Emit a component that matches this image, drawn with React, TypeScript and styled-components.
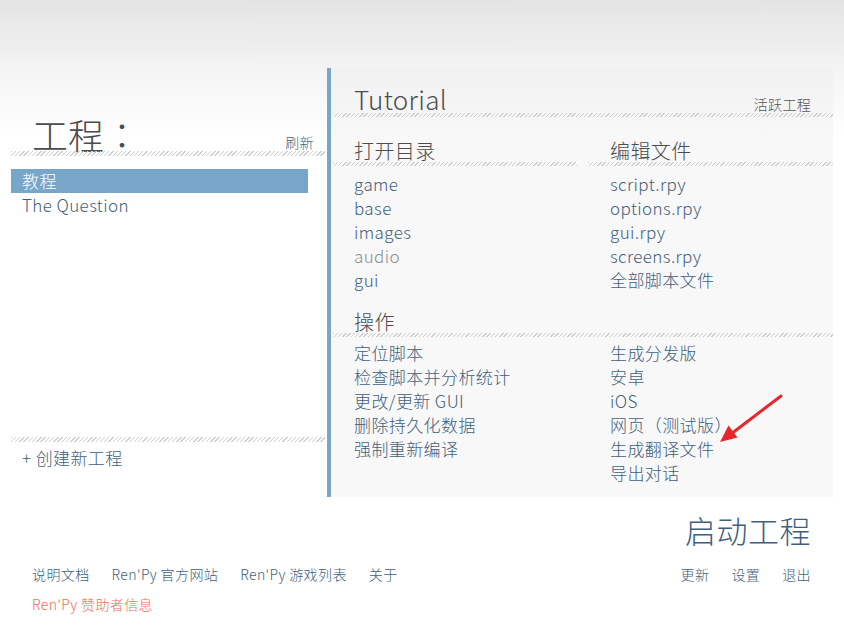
import styled, { createGlobalStyle } from "styled-components";

const GlobalStyle = createGlobalStyle`
  body {
    margin: 0;
    font-family: "Noto Sans CJK SC", "Noto Sans", sans-serif;
    font-weight: 300;
    text-spacing-trim: space-all;
  }
`;

const LINK = "#41607c";
const ACCENT = "#78a6c8";

const Page = styled.div`
  position: relative;
  width: 844px;
  height: 633px;
  overflow: hidden;
  background: linear-gradient(#e4e4e4 0px, #f6f6f6 80px, #ffffff 140px);
  padding-top: 68px;
  box-sizing: border-box;
`;

const Main = styled.div`
  display: flex;
  height: 429px;
  padding-left: 11px;
`;

const LeftPanel = styled.div`
  width: 314px;
  display: flex;
  flex-direction: column;
`;

const Divider = styled.div`
  width: 4px;
  margin-left: 2px;
  background: ${ACCENT};
`;

const RightPanel = styled.div`
  width: 502px;
  display: flex;
  flex-direction: column;
  background: linear-gradient(#f1f1f1 0px, #f8f8f8 70px);
`;

const Hatch = styled.div<{ $h?: number; $inset?: number }>`
  height: ${(p) => p.$h ?? 4}px;
  margin-left: ${(p) => p.$inset ?? 0}px;
  background: repeating-linear-gradient(
    135deg,
    #cfcfcf 0px,
    #cfcfcf 1px,
    transparent 1px,
    transparent 3px
  );
`;

const LeftHeader = styled.div`
  height: 83px;
  display: flex;
  align-items: flex-end;
  justify-content: space-between;
  padding: 0 11px 0 21px;
`;

const BigTitle = styled.div`
  font-family: "Noto Sans CJK TC", "Noto Sans CJK SC", sans-serif;
  font-size: 36px;
  line-height: 34px;
  color: #4c4c4c;
`;

const SmallLink = styled.div<{ $color?: string }>`
  font-size: 14px;
  line-height: 18px;
  letter-spacing: 0.4px;
  color: ${(p) => p.$color ?? LINK};
`;

const ProjectList = styled.div`
  flex: 1;
  margin: 13px 17px 0 0;
`;

const ProjectItem = styled.div<{ $selected?: boolean }>`
  height: 24px;
  line-height: 24px;
  padding-left: 11px;
  font-size: 17px;
  letter-spacing: 0.4px;
  color: ${(p) => (p.$selected ? "#ffffff" : LINK)};
  background: ${(p) => (p.$selected ? ACCENT : "transparent")};
`;

const CreateLink = styled.div`
  margin-top: 4px;
  padding: 0 0 27px 11px;
  line-height: 24px;
  font-size: 17px;
  letter-spacing: 0.4px;
  color: ${LINK};
`;

const RightHeader = styled.div`
  display: flex;
  align-items: flex-end;
  justify-content: space-between;
  padding: 17px 22px 0 23px;
`;

const ProjectName = styled.div`
  font-size: 26px;
  line-height: 28px;
  letter-spacing: 0.3px;
  color: #4c4c4c;
`;

const Caption = styled.div`
  font-size: 14px;
  line-height: 18px;
  letter-spacing: 0.3px;
  color: #555555;
`;

const Columns = styled.div<{ $top: number }>`
  display: grid;
  grid-template-columns: 244px 1fr;
  column-gap: 11px;
  margin: ${(p) => p.$top}px 0 0 2px;
`;

const Heading = styled.div<{ $top?: number; $pad?: number }>`
  font-size: 20px;
  line-height: 22px;
  letter-spacing: 0.4px;
  padding-left: ${(p) => p.$pad ?? 21}px;
  margin-top: ${(p) => p.$top ?? 0}px;
  color: #4c4c4c;
`;

const List = styled.div<{ $pad: number; $top: number }>`
  padding-left: ${(p) => p.$pad}px;
  margin-top: ${(p) => p.$top}px;
`;

const Item = styled.div<{ $muted?: boolean }>`
  font-size: 17px;
  line-height: 24px;
  letter-spacing: 0.4px;
  color: ${(p) => (p.$muted ? "#8e8e8e" : LINK)};
  white-space: nowrap;
`;

const Footer = styled.div`
  padding: 15px 33px 0 32px;
`;

const LaunchButton = styled.div`
  text-align: right;
  font-size: 31px;
  line-height: 36px;
  letter-spacing: 0.5px;
  color: ${LINK};
`;

const LinkRow = styled.div`
  display: flex;
  justify-content: space-between;
  margin-top: 17px;
`;

const LinkGroup = styled.div`
  display: flex;
  gap: 22px;
  line-height: 20px;
`;

const Sponsor = styled.div`
  margin-top: 12px;
  line-height: 20px;
`;

const ArrowMark = styled.svg`
  position: absolute;
  left: 0;
  top: 0;
  pointer-events: none;
`;

const openDirs = ["game", "base", "images", "audio", "gui"];
const editFiles = ["script.rpy", "options.rpy", "gui.rpy", "screens.rpy", "全部脚本文件"];
const actionsLeft = ["定位脚本", "检查脚本并分析统计", "更改/更新 GUI", "删除持久化数据", "强制重新编译"];
const actionsRight = ["生成分发版", "安卓", "iOS", "网页（测试版）", "生成翻译文件", "导出对话"];

function App() {
  return (
    <Page>
      <GlobalStyle />
      <Main>
        <LeftPanel>
          <LeftHeader>
            <BigTitle>工程：</BigTitle>
            <SmallLink>刷新</SmallLink>
          </LeftHeader>
          <Hatch $h={5} />
          <ProjectList>
            <ProjectItem $selected>教程</ProjectItem>
            <ProjectItem>The Question</ProjectItem>
          </ProjectList>
          <Hatch $h={5} />
          <CreateLink>+ 创建新工程</CreateLink>
        </LeftPanel>
        <Divider />
        <RightPanel>
          <RightHeader>
            <ProjectName>Tutorial</ProjectName>
            <Caption>活跃工程</Caption>
          </RightHeader>
          <Hatch $inset={2} />
          <Columns $top={23}>
            <div>
              <Heading>打开目录</Heading>
              <Hatch />
              <List $pad={21} $top={6}>
                {openDirs.map((d) => (
                  <Item key={d} $muted={d === "audio"}>
                    {d}
                  </Item>
                ))}
              </List>
            </div>
            <div>
              <Heading $pad={22}>编辑文件</Heading>
              <Hatch />
              <List $pad={22} $top={6}>
                {editFiles.map((f) => (
                  <Item key={f}>{f}</Item>
                ))}
              </List>
            </div>
          </Columns>
          <Heading $top={19} $pad={23}>
            操作
          </Heading>
          <Hatch $inset={2} />
          <Columns $top={0}>
            <List $pad={21} $top={4}>
              {actionsLeft.map((a) => (
                <Item key={a}>{a}</Item>
              ))}
            </List>
            <List $pad={22} $top={4}>
              {actionsRight.map((a) => (
                <Item key={a}>{a}</Item>
              ))}
            </List>
          </Columns>
        </RightPanel>
      </Main>
      <Footer>
        <LaunchButton>启动工程</LaunchButton>
        <LinkRow>
          <LinkGroup>
            <SmallLink>说明文档</SmallLink>
            <SmallLink>Ren'Py 官方网站</SmallLink>
            <SmallLink>Ren'Py 游戏列表</SmallLink>
            <SmallLink>关于</SmallLink>
          </LinkGroup>
          <LinkGroup>
            <SmallLink>更新</SmallLink>
            <SmallLink>设置</SmallLink>
            <SmallLink>退出</SmallLink>
          </LinkGroup>
        </LinkRow>
        <Sponsor>
          <SmallLink $color="#ef6b5a">Ren'Py 赞助者信息</SmallLink>
        </Sponsor>
      </Footer>
      <ArrowMark width="844" height="633" viewBox="0 0 844 633">
        <line x1="781" y1="396" x2="731" y2="434" stroke="#e8262b" strokeWidth="3" strokeLinecap="round" />
        <polygon points="720,442 737.5,437.5 728.5,425.5" fill="#e8262b" />
      </ArrowMark>
    </Page>
  );
}

export default App;
